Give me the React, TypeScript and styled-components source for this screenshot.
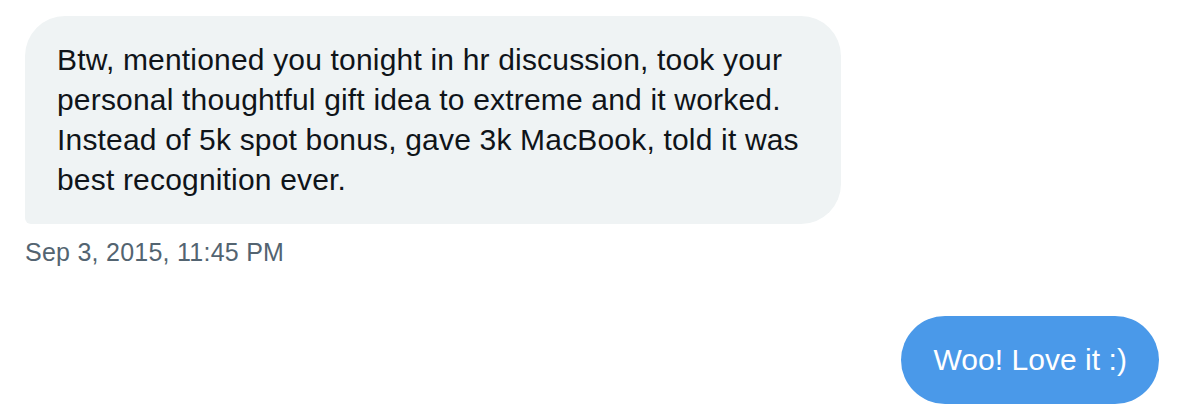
import React from "react";
import styled, { createGlobalStyle } from "styled-components";

const Global = createGlobalStyle`
  html, body { margin: 0; padding: 0; background: #ffffff; }
  body { font-family: "Liberation Sans", Arial, sans-serif; }
`;

const Thread = styled.div`
  width: 1180px;
  height: 412px;
  box-sizing: border-box;
  padding: 16px 21px 0 25px;
  display: flex;
  flex-direction: column;
`;

const Group = styled.div<{ $side: "left" | "right" }>`
  display: flex;
  flex-direction: column;
  align-items: ${(p) => (p.$side === "left" ? "flex-start" : "flex-end")};
`;

const Bubble = styled.div<{ $sent?: boolean }>`
  box-sizing: border-box;
  width: ${(p) => (p.$sent ? "auto" : "816px")};
  padding: 24px 32px;
  font-size: 30px;
  line-height: 40px;
  font-family: "Liberation Sans", Arial, sans-serif;
  background: ${(p) => (p.$sent ? "#4a99e9" : "#eff3f4")};
  color: ${(p) => (p.$sent ? "#ffffff" : "#0f1419")};
  border-radius: ${(p) => (p.$sent ? "44px" : "40px 40px 40px 6px")};
  letter-spacing: ${(p) => (p.$sent ? "0.05px" : "0.18px")};
  white-space: nowrap;
`;

const Stamp = styled.div`
  margin-top: 12px;
  font-size: 25px;
  line-height: 32px;
  letter-spacing: 0.25px;
  color: #536471;
`;

const Spacer = styled.div`
  height: 48px;
`;

const lines = [
  "Btw, mentioned you tonight in hr discussion, took your",
  "personal thoughtful gift idea to extreme and it worked.",
  "Instead of 5k spot bonus, gave 3k MacBook, told it was",
  "best recognition ever.",
];

export default function App() {
  return (
    <>
      <Global />
      <Thread>
        <Group $side="left">
          <Bubble>
            {lines.map((l, i) => (
              <React.Fragment key={i}>
                {l}
                {i < lines.length - 1 && <br />}
              </React.Fragment>
            ))}
          </Bubble>
          <Stamp>Sep 3, 2015, 11:45 PM</Stamp>
        </Group>
        <Spacer />
        <Group $side="right">
          <Bubble $sent>Woo! Love it :)</Bubble>
        </Group>
      </Thread>
    </>
  );
}
